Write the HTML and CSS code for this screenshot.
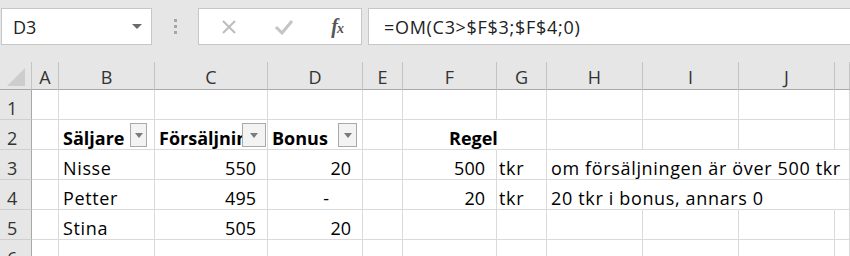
FILE: index.html
```html
<!DOCTYPE html>
<html lang="sv">
<head>
    <meta charset="UTF-8">
    <title>Bonus - OM</title>
    <link rel="stylesheet" href="styles.css">
</head>
<body>
    <div class="toolbar">
        <div class="name-box">
            <span class="name-text">D3</span>
            <span class="name-arrow"></span>
        </div>
        <div class="grip">
            <span></span><span></span><span></span>
        </div>
        <div class="fx-buttons">
            <svg class="fx-icon" width="16" height="16" viewBox="0 0 16 16">
                <path d="M2 2 L14 14 M14 2 L2 14" stroke="#bdbdbd" stroke-width="2" fill="none"/>
            </svg>
            <svg class="fx-icon" width="20" height="16" viewBox="0 0 20 16">
                <path d="M2 8 L8 14 L18 2" stroke="#c4c4c4" stroke-width="3" fill="none"/>
            </svg>
            <span class="fx-label"><i>f</i><i class="fx-x">x</i></span>
        </div>
        <div class="formula-box">=OM(C3&gt;$F$3;$F$4;0)</div>
    </div>

    <div class="sheet">
        <div class="row head-row">
            <div class="corner"><span class="corner-tri"></span></div>
            <div class="col-head">A</div>
            <div class="col-head">B</div>
            <div class="col-head">C</div>
            <div class="col-head">D</div>
            <div class="col-head">E</div>
            <div class="col-head">F</div>
            <div class="col-head">G</div>
            <div class="col-head">H</div>
            <div class="col-head">I</div>
            <div class="col-head">J</div>
            <div class="col-head"></div>
        </div>

        <div class="row">
            <div class="row-head">1</div>
            <div class="cell"></div><div class="cell"></div><div class="cell"></div><div class="cell"></div>
            <div class="cell"></div><div class="cell"></div><div class="cell"></div><div class="cell"></div>
            <div class="cell"></div><div class="cell"></div><div class="cell"></div>
        </div>

        <div class="row">
            <div class="row-head">2</div>
            <div class="cell"></div>
            <div class="cell bold filter filter-b"><span>Säljare</span><span class="filter-btn"></span></div>
            <div class="cell bold filter filter-c"><span class="clip">Försäljning</span><span class="filter-btn"></span></div>
            <div class="cell bold filter filter-d"><span>Bonus</span><span class="filter-btn"></span></div>
            <div class="cell"></div>
            <div class="cell bold open"><span class="centered">Regel</span></div>
            <div class="cell"></div>
            <div class="cell"></div><div class="cell"></div><div class="cell"></div><div class="cell"></div>
        </div>

        <div class="row">
            <div class="row-head">3</div>
            <div class="cell"></div>
            <div class="cell">Nisse</div>
            <div class="cell num">550</div>
            <div class="cell num">20</div>
            <div class="cell"></div>
            <div class="cell num">500</div>
            <div class="cell tight">tkr</div>
            <div class="cell open">om försäljningen är över 500 tkr</div>
            <div class="cell open"></div>
            <div class="cell open"></div>
            <div class="cell"></div>
        </div>

        <div class="row">
            <div class="row-head">4</div>
            <div class="cell"></div>
            <div class="cell">Petter</div>
            <div class="cell num">495</div>
            <div class="cell num dash">-</div>
            <div class="cell"></div>
            <div class="cell num">20</div>
            <div class="cell tight">tkr</div>
            <div class="cell open">20 tkr i bonus, annars 0</div>
            <div class="cell open"></div>
            <div class="cell open"></div>
            <div class="cell"></div>
        </div>

        <div class="row">
            <div class="row-head">5</div>
            <div class="cell"></div>
            <div class="cell">Stina</div>
            <div class="cell num">505</div>
            <div class="cell num">20</div>
            <div class="cell"></div><div class="cell"></div><div class="cell"></div>
            <div class="cell"></div><div class="cell"></div><div class="cell"></div><div class="cell"></div>
        </div>

        <div class="row">
            <div class="row-head">6</div>
            <div class="cell"></div><div class="cell"></div><div class="cell"></div><div class="cell"></div>
            <div class="cell"></div><div class="cell"></div><div class="cell"></div><div class="cell"></div>
            <div class="cell"></div><div class="cell"></div><div class="cell"></div>
        </div>
    </div>
</body>
</html>
```

FILE: styles.css
```css
body {
    margin: 0;
    width: 850px;
    height: 256px;
    overflow: hidden;
    background-color: #e6e6e6;
    font-family: 'Open Sans', 'Noto Sans', sans-serif;
    color: #000;
}

/* formula bar */
.toolbar {
    height: 62px;
    box-sizing: border-box;
    padding: 8px 0 0 1px;
    display: flex;
    align-items: flex-start;
}

.name-box,
.fx-buttons,
.formula-box {
    height: 37px;
    box-sizing: border-box;
    background-color: #fff;
    border: 1px solid #c6c6c6;
    display: flex;
    align-items: center;
}

.name-box {
    width: 151px;
    padding: 0 9px 0 11px;
    justify-content: space-between;
}

.name-text,
.formula-box {
    font-size: 18px;
    color: #222;
}

.name-arrow {
    width: 0;
    height: 0;
    border-left: 5px solid transparent;
    border-right: 5px solid transparent;
    border-top: 5px solid #6a6a6a;
}

.grip {
    width: 46px;
    height: 37px;
    display: flex;
    flex-direction: column;
    align-items: center;
    justify-content: center;
    gap: 3px;
}

.grip span {
    width: 3px;
    height: 3px;
    background-color: #a6a6a6;
}

.fx-buttons {
    width: 164px;
    padding: 0 18px 0 22px;
    justify-content: space-between;
}

.fx-label {
    font-family: 'Liberation Serif', 'DejaVu Serif', serif;
    font-size: 20px;
    font-weight: bold;
    color: #555;
    letter-spacing: -1px;
}

.fx-x {
    font-size: 14px;
}

.formula-box {
    flex: 1;
    margin-left: 6px;
    border-right: none;
    padding-left: 15px;
    letter-spacing: 0.7px;
}

/* sheet */
.sheet {
    background-color: #fff;
    font-size: 18px;
    line-height: 1;
}

.row {
    display: grid;
    grid-template-columns: 32px 27px 96px 113px 95px 40px 94px 50px 96px 96px 96px 15px;
    height: 30px;
    background-color: #fff;
}

.head-row {
    height: 28px;
    background-color: #e6e6e6;
}

.corner {
    position: relative;
    border-right: 1px solid #c4c4c4;
    border-bottom: 1px solid #a8a8a8;
}

.corner-tri {
    position: absolute;
    right: 6px;
    bottom: 3px;
    width: 0;
    height: 0;
    border-left: 18px solid transparent;
    border-bottom: 18px solid #cdcdcd;
}

.col-head {
    border-right: 1px solid #c4c4c4;
    border-bottom: 1px solid #a8a8a8;
    display: flex;
    justify-content: center;
    align-items: flex-end;
    padding-bottom: 3px;
    color: #333;
}

.row-head {
    background-color: #e6e6e6;
    border-right: 1px solid #a8a8a8;
    border-bottom: 1px solid #cfcfcf;
    display: flex;
    align-items: flex-end;
    padding: 0 0 2px 7px;
    color: #333;
}

.cell {
    position: relative;
    border-right: 1px solid #dadada;
    border-bottom: 1px solid #dadada;
    display: flex;
    align-items: flex-end;
    padding: 0 0 2px 4px;
    white-space: nowrap;
    min-width: 0;
    letter-spacing: 0.65px;
}

.cell.num {
    justify-content: flex-end;
    padding: 0 11px 2px 0;
    letter-spacing: 0;
}

.cell.dash {
    padding-right: 33px;
}

.cell.tight {
    padding-left: 2px;
}

.cell.open {
    border-right-color: transparent;
}

.bold {
    font-weight: bold;
    letter-spacing: 0;
}

.clip {
    overflow: hidden;
    padding-bottom: 5px;
    margin-bottom: -5px;
    max-width: 83px;
}

.centered {
    margin-left: 42px;
}

.filter {
    padding-right: 0;
}

.filter-btn {
    position: absolute;
    bottom: 2px;
    width: 17px;
    height: 24px;
    box-sizing: border-box;
    background-color: #f3f3f3;
    border: 1px solid #a9a9a9;
    display: flex;
    justify-content: center;
    align-items: center;
}

.filter-btn::after {
    content: "";
    border-left: 4px solid transparent;
    border-right: 4px solid transparent;
    border-top: 5px solid #7b7b7b;
}

.filter-b .filter-btn { right: 7px; }
.filter-c .filter-btn { right: 1px; width: 24px; }
.filter-d .filter-btn { right: 5px; width: 19px; }
```
